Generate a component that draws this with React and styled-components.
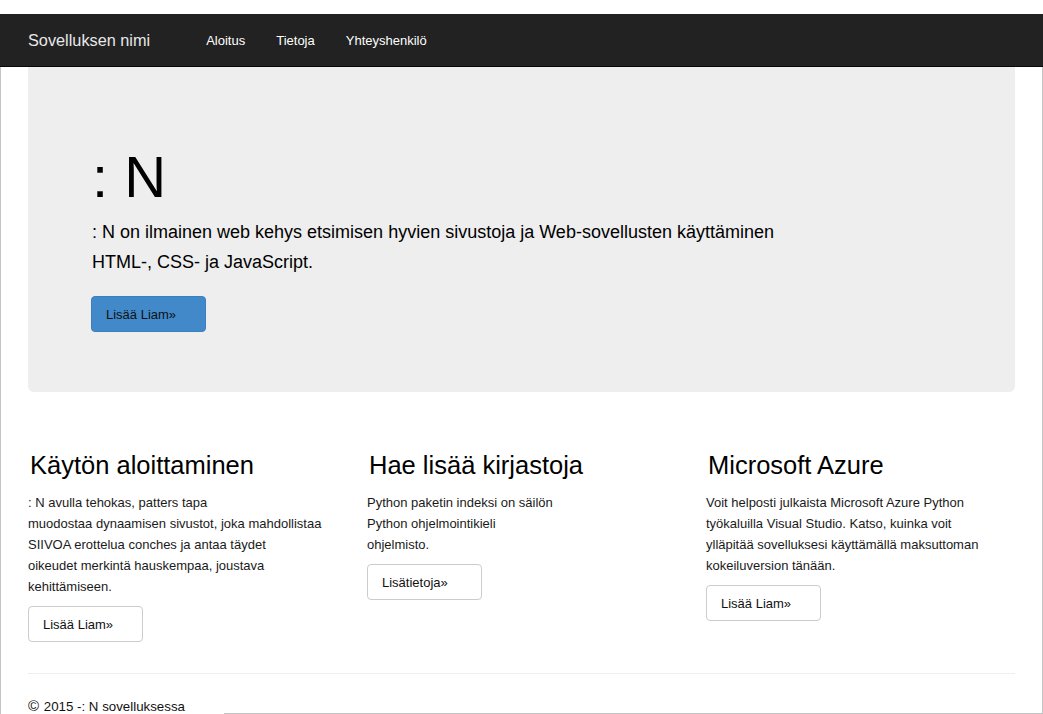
import React from "react";
import styled, { createGlobalStyle } from "styled-components";

const Global = createGlobalStyle`
  html, body { margin: 0; padding: 0; background: #fff; }
  body { font-family: "Liberation Sans", Arial, sans-serif; color: #222; }
  * { box-sizing: border-box; }
`;

const Page = styled.div`
  position: relative;
  width: 1043px;
  height: 714px;
  overflow: hidden;
  padding-top: 14px;
`;

const Navbar = styled.nav`
  height: 53px;
  background: #222;
  border-bottom: 1px solid #080808;
  display: flex;
  align-items: center;
  padding: 0 28px;
`;

const Brand = styled.a`
  color: #e8e8e8;
  font-size: 16.3px;
  text-decoration: none;
  margin-right: 56px;
`;

const NavLinks = styled.div`
  display: flex;
  gap: 31px;
`;

const NavLink = styled.a`
  color: #fff;
  font-size: 13px;
  text-decoration: none;
`;

const Container = styled.div`
  width: 987px;
  margin: 0 auto;
`;

const Jumbotron = styled.section`
  background: #eee;
  border-radius: 0 0 6px 6px;
  padding: 78px 63px 60px;
`;

const Title = styled.h1`
  margin: 0 0 9px 1px;
  font-size: 58px;
  line-height: 63px;
  font-weight: 400;
  color: #000;
`;

const Lead = styled.p`
  margin: 0 0 19px 1px;
  font-size: 18px;
  line-height: 30px;
  color: #000;
`;

const Button = styled.a`
  display: flex;
  align-items: center;
  width: 115px;
  height: 36px;
  padding-left: 14px;
  font-size: 13px;
  color: #111;
  text-decoration: none;
  border-radius: 4px;
  border: 1px solid ${(p) => (p.$primary ? "#3a7fbf" : "#ccc")};
  background: ${(p) => (p.$primary ? "#4189c9" : "#fff")};
`;

const Row = styled.div`
  display: grid;
  grid-template-columns: repeat(3, 339px);
  margin: 0 -15px;
  padding-top: 60px;
`;

const Col = styled.div`
  padding: 0 15px;
`;

const ColTitle = styled.h2`
  margin: 0 0 14px 2px;
  font-size: 25.5px;
  line-height: 26px;
  font-weight: 400;
  color: #000;
`;

const ColText = styled.p`
  margin: 0 0 9px;
  font-size: 13px;
  line-height: 21px;
  color: #1a1a1a;
`;

const Divider = styled.hr`
  border: 0;
  border-top: 1px solid #eee;
  margin: 31px 0 0;
`;

const Footer = styled.footer`
  padding-top: 22px;
  font-size: 13.3px;
  line-height: 20px;
  color: #111;
`;

const Copy = styled.span`
  font-size: 15px;
  margin-right: 1px;
`;

const FrameLine = styled.div`
  position: absolute;
  background: #c4c4c4;
  ${(p) => p.$side === "left" && "left: 0; top: 67px; bottom: 0; width: 1px;"}
  ${(p) => p.$side === "right" && "right: 0; top: 67px; bottom: 0; width: 1px;"}
  ${(p) => p.$side === "bottom" && "left: 224px; right: 0; bottom: 0; height: 1px;"}
`;

const columns = [
  {
    title: "Käytön aloittaminen",
    lines: [
      ": N avulla tehokas, patters tapa",
      "muodostaa dynaamisen sivustot, joka mahdollistaa",
      "SIIVOA erottelua conches ja antaa täydet",
      "oikeudet merkintä hauskempaa, joustava",
      "kehittämiseen.",
    ],
    button: "Lisää Liam»",
  },
  {
    title: "Hae lisää kirjastoja",
    lines: ["Python paketin indeksi on säilön", "Python ohjelmointikieli", "ohjelmisto."],
    button: "Lisätietoja»",
  },
  {
    title: "Microsoft Azure",
    lines: [
      "Voit helposti julkaista Microsoft Azure Python",
      "työkaluilla Visual Studio. Katso, kuinka voit",
      "ylläpitää sovelluksesi käyttämällä maksuttoman",
      "kokeiluversion tänään.",
    ],
    button: "Lisää Liam»",
  },
];

export default function App() {
  return (
    <>
      <Global />
      <Page>
        <Navbar>
          <Brand href="#">Sovelluksen nimi</Brand>
          <NavLinks>
            <NavLink href="#">Aloitus</NavLink>
            <NavLink href="#">Tietoja</NavLink>
            <NavLink href="#">Yhteyshenkilö</NavLink>
          </NavLinks>
        </Navbar>
        <Container>
          <Jumbotron>
            <Title>: N</Title>
            <Lead>
              : N on ilmainen web kehys etsimisen hyvien sivustoja ja Web-sovellusten käyttäminen
              <br />
              HTML-, CSS- ja JavaScript.
            </Lead>
            <Button $primary href="#">Lisää Liam»</Button>
          </Jumbotron>
          <Row>
            {columns.map((c) => (
              <Col key={c.title}>
                <ColTitle>{c.title}</ColTitle>
                <ColText>
                  {c.lines.map((l, i) => (
                    <React.Fragment key={i}>
                      {l}
                      {i < c.lines.length - 1 && <br />}
                    </React.Fragment>
                  ))}
                </ColText>
                <Button href="#">{c.button}</Button>
              </Col>
            ))}
          </Row>
          <Divider />
          <Footer>
            <Copy>©</Copy> 2015 -: N sovelluksessa
          </Footer>
        </Container>
        <FrameLine $side="left" />
        <FrameLine $side="right" />
        <FrameLine $side="bottom" />
      </Page>
    </>
  );
}
